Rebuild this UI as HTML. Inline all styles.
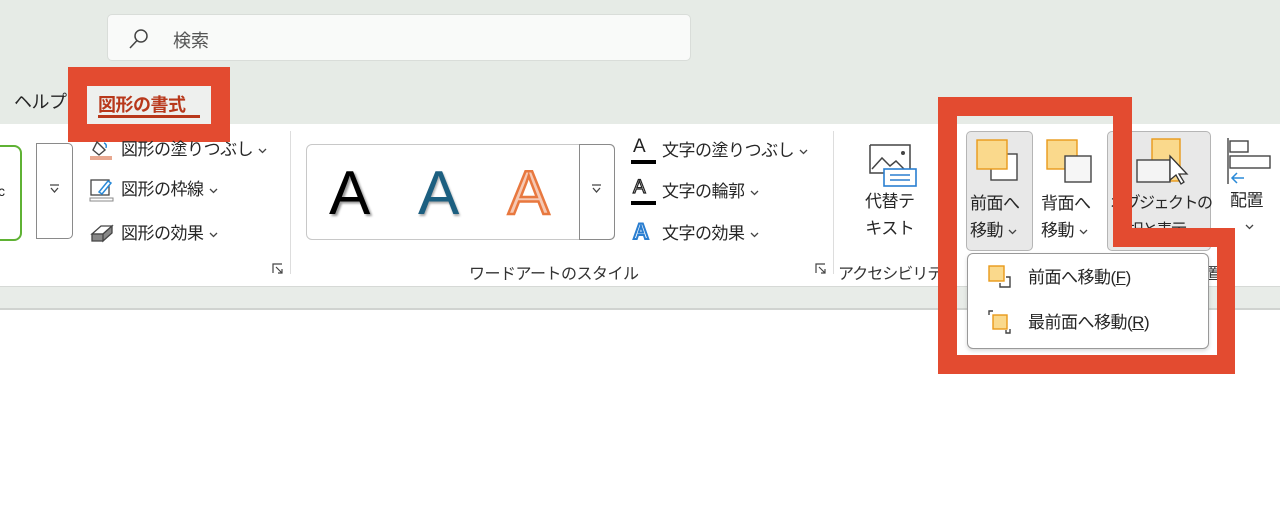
<!DOCTYPE html>
<html><head><meta charset="utf-8"><style>
body{margin:0;width:1280px;height:522px;overflow:hidden;background:#fff;font-family:"Liberation Sans","Noto Sans CJK JP",sans-serif;position:relative;color:#222}
.a{position:absolute;white-space:nowrap}
.t{font-size:17px;color:#262626;line-height:20px;letter-spacing:-0.5px}
.c{display:inline-block;width:9px;height:6px;margin-left:5px;vertical-align:middle;background:no-repeat}
.c svg{display:block}
</style></head><body>
<div class="a" style="left:0;top:0;width:1280px;height:124px;background:#e6ebe6"></div>
<div class="a" style="left:107px;top:14px;width:584px;height:47px;background:#f9faf9;border:1px solid #d9ddd9;border-radius:5px;box-sizing:border-box"></div>
<svg class="a" style="left:126px;top:26px" width="26" height="26" viewBox="0 0 26 26"><circle cx="15" cy="10" r="6" fill="none" stroke="#444" stroke-width="1.5"/><path d="M11 14.5L4 22" stroke="#444" stroke-width="1.5"/></svg>
<div class="a" style="left:173px;top:27px;font-size:18px;color:#555">検索</div>
<div class="a t" style="left:14px;top:92px;font-size:18px">ヘルプ</div>
<!-- ribbon -->
<div class="a" style="left:0;top:124px;width:1280px;height:162px;background:#fff;"></div>
<div class="a" style="left:0;top:286px;width:1280px;height:24px;background:#e8ece8;border-top:1px solid #d6d9d6;border-bottom:2px solid #d0d3d0;box-sizing:border-box"></div>
<div class="a" style="left:68px;top:67px;width:162px;height:75px;background:#e34b30"></div>
<div class="a" style="left:87px;top:86px;width:124px;height:38px;background:#eef0ee"></div>
<div class="a" style="left:98px;top:91px;font-size:18px;font-weight:bold;color:#b8381b;letter-spacing:-0.5px">図形の書式</div>
<div class="a" style="left:98px;top:115px;width:102px;height:3px;background:#b8381b"></div>
<!-- left -->
<div class="a" style="left:-10px;top:145px;width:28px;height:92px;border:2px solid #5fb234;border-radius:8px"></div>
<div class="a" style="left:-2px;top:183px;font-size:14px">c</div>
<div class="a" style="left:36px;top:143px;width:37px;height:96px;border:1px solid #8a8a8a;border-radius:0 5px 5px 0;box-sizing:border-box"></div>
<svg class="a" style="left:49px;top:184px" width="11" height="10"><path d="M1 1h9M2 4l3.5 4 3.5-4" fill="none" stroke="#444" stroke-width="1.3"/></svg>
<svg class="a" style="left:89px;top:138px" width="26" height="24"><path d="M8 4l8 8-6 5-6-5z" fill="none" stroke="#444" stroke-width="1.4"/><path d="M15 5q3 1 2 5" stroke="#2a8ad8" fill="none" stroke-width="1.5"/><rect x="1" y="18" width="22" height="4" fill="#e8a890"/></svg>
<div class="a t" style="left:121px;top:140px">図形の塗りつぶし<span class="c"><svg width="9" height="6"><path d="M1 1l3.5 3.5L8 1" fill="none" stroke="#444" stroke-width="1.3"/></svg></span></div>
<svg class="a" style="left:89px;top:177px" width="26" height="26"><rect x="2" y="3" width="18" height="15" fill="none" stroke="#444" stroke-width="1.3"/><path d="M10 15l9-11 3 2-9 11z" fill="#fff" stroke="#2a8ad8" stroke-width="1.5"/><rect x="1" y="21" width="23" height="3" fill="#fff" stroke="#888"/></svg>
<div class="a t" style="left:121px;top:180px">図形の枠線<span class="c"><svg width="9" height="6"><path d="M1 1l3.5 3.5L8 1" fill="none" stroke="#444" stroke-width="1.3"/></svg></span></div>
<svg class="a" style="left:89px;top:222px" width="26" height="22"><path d="M3 12l9-8h11l-9 8z" fill="#fff" stroke="#444" stroke-width="1.3"/><path d="M3 12h11v7H3z M14 12l9-8v7l-9 8z" fill="#888" stroke="#444" stroke-width="1.3"/></svg>
<div class="a t" style="left:121px;top:224px">図形の効果<span class="c"><svg width="9" height="6"><path d="M1 1l3.5 3.5L8 1" fill="none" stroke="#444" stroke-width="1.3"/></svg></span></div>
<svg class="a" style="left:272px;top:263px" width="11" height="11"><path d="M1 10V1h9M4 4l6 6M6 10h4V6" fill="none" stroke="#444" stroke-width="1.2"/></svg>
<div class="a" style="left:290px;top:131px;width:1px;height:143px;background:#ddd"></div>
<!-- wordart -->
<div class="a" style="left:306px;top:144px;width:309px;height:96px;border:1px solid #c8c8c8;border-radius:6px;box-sizing:border-box"></div>
<div class="a" style="left:579px;top:144px;width:36px;height:96px;border:1px solid #8a8a8a;border-radius:0 5px 5px 0;box-sizing:border-box"></div>
<svg class="a" style="left:591px;top:184px" width="11" height="10"><path d="M1 1h9M2 4l3.5 4 3.5-4" fill="none" stroke="#444" stroke-width="1.3"/></svg>
<div class="a" style="left:329px;top:158px;font-size:62px;line-height:72px;color:#000;text-shadow:2px 2px 2px #999">A</div>
<div class="a" style="left:418px;top:158px;font-size:62px;line-height:72px;color:#1c5f80;text-shadow:1px 2px 2px #aaa">A</div>
<div class="a" style="left:508px;top:158px;font-size:62px;line-height:72px;color:#f6c9b4;-webkit-text-stroke:2.5px #e8783f">A</div>
<div class="a" style="left:469px;top:260px;font-size:16px;color:#333;letter-spacing:-0.5px">ワードアートのスタイル</div>
<div class="a" style="left:633px;top:136px;font-size:19px;color:#222">A</div><div class="a" style="left:631px;top:160px;width:25px;height:4px;background:#000"></div>
<div class="a t" style="left:662px;top:141px">文字の塗りつぶし<span class="c"><svg width="9" height="6"><path d="M1 1l3.5 3.5L8 1" fill="none" stroke="#444" stroke-width="1.3"/></svg></span></div>
<div class="a" style="left:633px;top:177px;font-size:19px;color:#fff;-webkit-text-stroke:1.2px #222">A</div><div class="a" style="left:631px;top:201px;width:25px;height:4px;background:#000"></div>
<div class="a t" style="left:662px;top:182px">文字の輪郭<span class="c"><svg width="9" height="6"><path d="M1 1l3.5 3.5L8 1" fill="none" stroke="#444" stroke-width="1.3"/></svg></span></div>
<div class="a" style="left:633px;top:219px;font-size:22px;font-weight:bold;color:#fff;-webkit-text-stroke:2px #2a7ed0">A</div>
<div class="a t" style="left:662px;top:224px">文字の効果<span class="c"><svg width="9" height="6"><path d="M1 1l3.5 3.5L8 1" fill="none" stroke="#444" stroke-width="1.3"/></svg></span></div>
<svg class="a" style="left:815px;top:263px" width="11" height="11"><path d="M1 10V1h9M4 4l6 6M6 10h4V6" fill="none" stroke="#444" stroke-width="1.2"/></svg>
<div class="a" style="left:833px;top:131px;width:1px;height:143px;background:#ddd"></div>
<!-- alt text -->
<svg class="a" style="left:868px;top:143px" width="50" height="46"><path d="M2 2h40v24M2 2v28h14" fill="none" stroke="#444" stroke-width="1.5"/><path d="M4 26l10-11 8 8 6-5 8 8" fill="none" stroke="#444" stroke-width="1.5"/><circle cx="35" cy="10" r="2" fill="#444"/><rect x="16" y="26" width="32" height="17" fill="#fff" stroke="#2a7ed0" stroke-width="1.6"/><path d="M22 32h20M22 37h20" stroke="#2a7ed0" stroke-width="1.5"/></svg>
<div class="a t" style="left:865px;top:188px;line-height:27px;text-align:center">代替テ<br>キスト</div>
<div class="a" style="left:838px;top:260px;font-size:16px;color:#333;letter-spacing:-1px">アクセシビリティ</div>
<!-- arrange -->
<div class="a" style="left:966px;top:131px;width:67px;height:120px;background:#e8e8e8;border:1px solid #b5b5b5;border-radius:5px;box-sizing:border-box"></div>
<svg class="a" style="left:975px;top:137px" width="50" height="50"><rect x="16" y="17" width="26" height="26" fill="#fff" stroke="#444" stroke-width="1.4"/><rect x="2" y="3" width="30" height="29" fill="#fad98c" stroke="#e89a1a" stroke-width="1.4"/></svg>
<div class="a t" style="left:970px;top:190px;line-height:27px">前面へ<br>移動<span class="c"><svg width="9" height="6"><path d="M1 1l3.5 3.5L8 1" fill="none" stroke="#444" stroke-width="1.3"/></svg></span></div>
<svg class="a" style="left:1045px;top:137px" width="50" height="50"><rect x="2" y="3" width="30" height="29" fill="#fad98c" stroke="#e89a1a" stroke-width="1.4"/><rect x="20" y="19" width="26" height="26" fill="#f6f6f6" stroke="#444" stroke-width="1.4"/></svg>
<div class="a t" style="left:1041px;top:190px;line-height:27px">背面へ<br>移動<span class="c"><svg width="9" height="6"><path d="M1 1l3.5 3.5L8 1" fill="none" stroke="#444" stroke-width="1.3"/></svg></span></div>
<div class="a" style="left:1107px;top:131px;width:104px;height:120px;background:#e8e8e8;border:1px solid #b5b5b5;border-radius:5px;box-sizing:border-box"></div>
<svg class="a" style="left:1130px;top:136px" width="60" height="52"><rect x="22" y="3" width="28" height="42" fill="#fad98c" stroke="#e89a1a" stroke-width="1.4"/><rect x="7" y="24" width="33" height="22" fill="#f4f4f4" stroke="#444" stroke-width="1.4"/><path d="M40 20v24l6-5 5 9 3-2-5-8h8z" fill="#fff" stroke="#333" stroke-width="1.3"/></svg>
<div class="a t" style="left:1110px;top:190px;line-height:27px;font-size:16px;letter-spacing:-1.5px">オブジェクトの<br>&nbsp;選択と表示</div>
<svg class="a" style="left:1226px;top:136px" width="50" height="50"><path d="M2 2v46" stroke="#444" stroke-width="1.4"/><rect x="4" y="5" width="18" height="11" fill="#fff" stroke="#444" stroke-width="1.4"/><rect x="4" y="20" width="40" height="12" fill="#fff" stroke="#444" stroke-width="1.4"/><path d="M18 42H6m5-5l-5 5 5 5" fill="none" stroke="#2a8ad8" stroke-width="1.5"/></svg>
<div class="a t" style="left:1230px;top:191px">配置</div>
<svg class="a" style="left:1245px;top:224px" width="9" height="6"><path d="M1 1l3.5 3.5L8 1" fill="none" stroke="#444" stroke-width="1.3"/></svg>
<div class="a" style="left:1205px;top:260px;font-size:16px;color:#333">置</div>
<!-- menu -->
<div class="a" style="left:967px;top:253px;width:242px;height:96px;background:#fff;border:1px solid #999;border-radius:6px;box-sizing:border-box;box-shadow:0 2px 4px rgba(0,0,0,.15)"></div>
<svg class="a" style="left:987px;top:264px" width="26" height="26"><path d="M13 19v4h10V13h-4" fill="none" stroke="#444" stroke-width="1.4"/><rect x="2" y="2" width="15" height="15" fill="#fad98c" stroke="#e89a1a" stroke-width="1.4"/></svg>
<div class="a t" style="left:1028px;top:268px">前面へ移動(<u>F</u>)</div>
<svg class="a" style="left:987px;top:309px" width="26" height="26"><path d="M6 2H2v4M19 21v3h4v-4" fill="none" stroke="#444" stroke-width="1.4"/><rect x="6" y="6" width="14" height="14" fill="#fad98c" stroke="#e89a1a" stroke-width="1.4"/></svg>
<div class="a t" style="left:1028px;top:313px">最前面へ移動(<u>R</u>)</div>
<!-- red highlight -->
<svg class="a" style="left:0;top:0" width="1280" height="522"><path fill-rule="evenodd" fill="#e34b30" d="M938 97H1132V228H1235V374H938Z M957 116V355H1217V247H1113V116Z"/></svg>
</body></html>
